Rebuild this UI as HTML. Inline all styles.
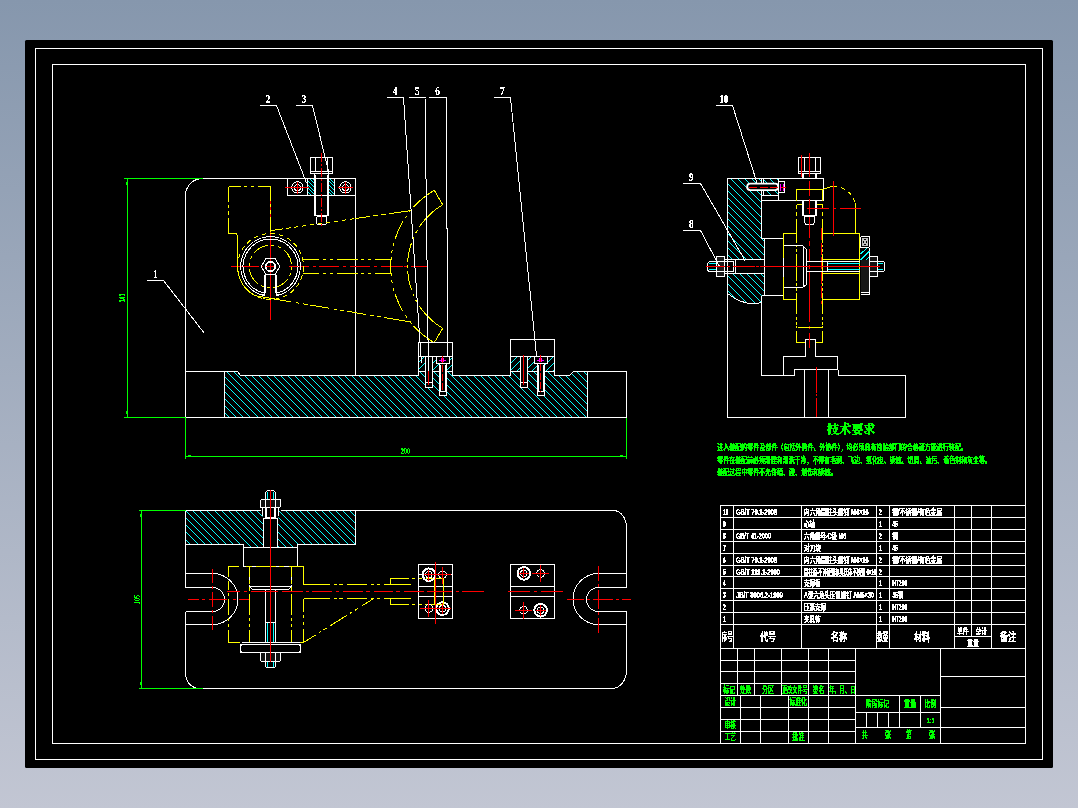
<!DOCTYPE html>
<html lang="zh"><head><meta charset="utf-8"><title>夹具装配图</title>
<style>
html,body{margin:0;padding:0;width:1078px;height:808px;overflow:hidden;background:#a9b2c4}
body{background:linear-gradient(to bottom,#8697ad 0%,#c2c6d3 100%)}
#sheet{position:absolute;left:25px;top:40px;width:1028px;height:728px;background:#000;border-radius:1.5px}
svg{position:absolute;left:0;top:0;display:block}
svg text{white-space:pre}
</style></head><body>
<div id="sheet"></div>
<svg width="1078" height="808" viewBox="0 0 1078 808" fill="none" stroke-width="1" shape-rendering="crispEdges">
<defs><filter id="th" x="-5%" y="-5%" width="110%" height="110%" color-interpolation-filters="sRGB"><feComponentTransfer><feFuncA type="discrete" tableValues="0 0 1 1 1"/></feComponentTransfer></filter></defs>
<rect x="35.5" y="48.5" width="1007" height="711" stroke="#fff" fill="none"/>
<rect x="52.5" y="64.5" width="973" height="679" stroke="#fff" fill="none"/>
<path d="M127.5 179L126.5 185M185.5 456.5L191 455.5M626.5 456.5L620 455.5M127.5 417L126.5 411" stroke="#0f0" fill="none"/>
<g filter="url(#th)"><text stroke="none" x="125.2" y="302.3" font-size="8.5" fill="#0f0" text-anchor="start" font-weight="bold" font-family='"Liberation Sans","Noto Sans CJK SC",sans-serif' textLength="8.6" lengthAdjust="spacingAndGlyphs" transform="rotate(-90 125.2 302.3)">141</text></g>
<g filter="url(#th)"><text stroke="none" x="400.8" y="454" font-size="8.5" fill="#0f0" text-anchor="start" font-weight="bold" font-family='"Liberation Sans","Noto Sans CJK SC",sans-serif' textLength="9.2" lengthAdjust="spacingAndGlyphs">200</text></g>
<clipPath id="hc1"><path d="M225 372H238L240.5 375.5H418.5V371.5H452.5V375.5H510.5V371.5H554.5V375.5H570L573.5 371.5H587V417.5H225Z"/></clipPath>
<path clip-path="url(#hc1)" d="M183.00 371L230.00 418M190.00 371L237.00 418M197.00 371L244.00 418M204.00 371L251.00 418M212.00 371L259.00 418M219.00 371L266.00 418M226.00 371L273.00 418M233.00 371L280.00 418M240.00 371L287.00 418M247.00 371L294.00 418M254.00 371L301.00 418M262.00 371L309.00 418M269.00 371L316.00 418M276.00 371L323.00 418M283.00 371L330.00 418M290.00 371L337.00 418M297.00 371L344.00 418M304.00 371L351.00 418M312.00 371L359.00 418M319.00 371L366.00 418M326.00 371L373.00 418M333.00 371L380.00 418M340.00 371L387.00 418M347.00 371L394.00 418M354.00 371L401.00 418M361.00 371L408.00 418M369.00 371L416.00 418M376.00 371L423.00 418M383.00 371L430.00 418M390.00 371L437.00 418M397.00 371L444.00 418M404.00 371L451.00 418M411.00 371L458.00 418M419.00 371L466.00 418M426.00 371L473.00 418M433.00 371L480.00 418M440.00 371L487.00 418M447.00 371L494.00 418M454.00 371L501.00 418M461.00 371L508.00 418M469.00 371L516.00 418M476.00 371L523.00 418M483.00 371L530.00 418M490.00 371L537.00 418M497.00 371L544.00 418M504.00 371L551.00 418M511.00 371L558.00 418M519.00 371L566.00 418M526.00 371L573.00 418M533.00 371L580.00 418M540.00 371L587.00 418M547.00 371L594.00 418M554.00 371L601.00 418M561.00 371L608.00 418M569.00 371L616.00 418M576.00 371L623.00 418M583.00 371L630.00 418" stroke="#0ff" fill="none"/>
<clipPath id="hc2"><path d="M418 357H452V371H418Z"/></clipPath>
<path clip-path="url(#hc2)" d="M425.00 356L409.00 372M432.00 356L416.00 372M440.00 356L424.00 372M447.00 356L431.00 372M454.00 356L438.00 372M461.00 356L445.00 372" stroke="#0ff" fill="none"/>
<clipPath id="hc3"><path d="M510 357H554V371H510Z"/></clipPath>
<path clip-path="url(#hc3)" d="M518.00 356L502.00 372M525.00 356L509.00 372M532.00 356L516.00 372M540.00 356L524.00 372M547.00 356L531.00 372M554.00 356L538.00 372M561.00 356L545.00 372M568.00 356L552.00 372" stroke="#0ff" fill="none"/>
<path d="M185.5 417.5V195.5A17 17 0 0 1 202.5 178.5H355.5V375" stroke="#fff" fill="none"/>
<line x1="185" y1="417.5" x2="627" y2="417.5" stroke="#fff" stroke-width="1"/>
<path d="M185.5 371.5H237.5L240.5 375.5H418.5M452.5 375.5H510.5M554.5 375.5H569.5L573.5 371.5H626.5V417.5" stroke="#fff" fill="none"/>
<line x1="224.5" y1="371" x2="224.5" y2="418" stroke="#fff" stroke-width="1"/>
<line x1="587.5" y1="371" x2="587.5" y2="418" stroke="#fff" stroke-width="1"/>
<rect x="287.5" y="178.5" width="68" height="17" stroke="#fff" fill="none"/>
<line x1="307.5" y1="178" x2="307.5" y2="196" stroke="#fff" stroke-width="1"/>
<line x1="334.5" y1="178" x2="334.5" y2="196" stroke="#fff" stroke-width="1"/>
<clipPath id="hc4"><path d="M308 179H314V195H308Z"/></clipPath>
<path clip-path="url(#hc4)" d="M294.00 178L312.00 196M298.00 178L316.00 196M301.00 178L319.00 196M305.00 178L323.00 196M309.00 178L327.00 196M312.00 178L330.00 196" stroke="#0ff" fill="none"/>
<clipPath id="hc5"><path d="M329 179H334V195H329Z"/></clipPath>
<path clip-path="url(#hc5)" d="M315.00 178L333.00 196M318.00 178L336.00 196M322.00 178L340.00 196M326.00 178L344.00 196M329.00 178L347.00 196M333.00 178L351.00 196" stroke="#0ff" fill="none"/>
<rect x="310.5" y="157.5" width="22" height="16" stroke="#fff" fill="none"/>
<line x1="315.5" y1="157" x2="315.5" y2="172" stroke="#fff" stroke-width="1"/>
<line x1="327.5" y1="157" x2="327.5" y2="172" stroke="#fff" stroke-width="1"/>
<line x1="310" y1="171.5" x2="333" y2="171.5" stroke="#fff" stroke-width="1"/>
<path d="M314.5 173.5V215.5H328.5V173.5M315.5 175V215M327.5 175V215" stroke="#fff" fill="none"/>
<path d="M316.5 216.5V223L317.5 224.5H325.5L326.5 223V216.5H316.5" stroke="#fff" fill="none"/>
<line x1="321.5" y1="153" x2="321.5" y2="228" stroke="#f00" stroke-width="1" stroke-dasharray="9 2 2 2"/>
<circle cx="297.5" cy="187.5" r="5.7" stroke="#fff" fill="none"/>
<circle cx="297.5" cy="187.5" r="3.0" stroke="#fff" fill="none"/>
<circle cx="345.5" cy="187.5" r="5.7" stroke="#fff" fill="none"/>
<circle cx="345.5" cy="187.5" r="3.0" stroke="#fff" fill="none"/>
<line x1="285" y1="187.5" x2="309" y2="187.5" stroke="#f00" stroke-width="1"/>
<line x1="297.5" y1="182" x2="297.5" y2="194" stroke="#f00" stroke-width="1"/>
<line x1="338" y1="187.5" x2="352.5" y2="187.5" stroke="#f00" stroke-width="1"/>
<line x1="345.5" y1="182" x2="345.5" y2="194" stroke="#f00" stroke-width="1"/>
<line x1="231" y1="266.5" x2="259.3" y2="266.5" stroke="#f00" stroke-width="1"/>
<line x1="261" y1="266.5" x2="263.4" y2="266.5" stroke="#f00" stroke-width="1"/>
<line x1="266" y1="266.5" x2="276" y2="266.5" stroke="#f00" stroke-width="1"/>
<line x1="289.3" y1="266.5" x2="308.6" y2="266.5" stroke="#f00" stroke-width="1"/>
<line x1="312.6" y1="266.5" x2="316" y2="266.5" stroke="#f00" stroke-width="1"/>
<line x1="318.9" y1="266.5" x2="339.3" y2="266.5" stroke="#f00" stroke-width="1"/>
<line x1="342.5" y1="266.5" x2="345.7" y2="266.5" stroke="#f00" stroke-width="1"/>
<line x1="350" y1="266.5" x2="370" y2="266.5" stroke="#f00" stroke-width="1"/>
<line x1="374" y1="266.5" x2="376.9" y2="266.5" stroke="#f00" stroke-width="1"/>
<line x1="380.7" y1="266.5" x2="402.9" y2="266.5" stroke="#f00" stroke-width="1"/>
<line x1="404" y1="266.5" x2="406.9" y2="266.5" stroke="#f00" stroke-width="1"/>
<line x1="411.4" y1="266.5" x2="427" y2="266.5" stroke="#f00" stroke-width="1"/>
<line x1="270.5" y1="200" x2="270.5" y2="320" stroke="#f00" stroke-width="1"/>
<path d="M228.50 186.50L241.10 186.50M244.10 186.50L247.10 186.50M250.70 186.50L254.30 186.50M257.90 186.50L270.50 186.50" stroke="#ff0" fill="none"/>
<path d="M228.50 186.50L228.50 201.60M228.50 204.60L228.50 207.60M228.50 211.20L228.50 214.80M228.50 218.40L228.50 233.50" stroke="#ff0" fill="none"/>
<path d="M270.50 186.50L270.50 200.60M270.50 203.60L270.50 206.60M270.50 210.20L270.50 213.80M270.50 217.40L270.50 231.50" stroke="#ff0" fill="none"/>
<path d="M228.5 233.5H236L237.5 235.5V268" stroke="#ff0" fill="none"/>
<path d="M237.50 266.50A33 33 0 0 0 264.77 299.00" stroke="#ff0" fill="none" stroke-dasharray="14 3 6 3 9 3 3 3"/>
<circle cx="270.5" cy="266.5" r="33" stroke="#ff0" fill="none" stroke-dasharray="5 3.6"/>
<circle cx="270.5" cy="266.5" r="21.2" stroke="#ff0" fill="none" stroke-dasharray="16.5 3.6 3 3.6 3 3.6" stroke-dashoffset="19.8"/>
<path d="M264.50 295.69A29.8 29.8 0 1 1 276.50 295.69" stroke="#fff" fill="none"/>
<path d="M264.50 293.23A27.4 27.4 0 1 1 276.50 293.23" stroke="#fff" fill="none"/>
<path d="M264.5 274.5V294.5M276.5 274.5V294.5M265.5 274.5V293M275.5 274.5V293M259 294.5H264M277 294.5H282" stroke="#fff" fill="none"/>
<path d="M279.70 266.50L275.10 274.47L265.90 274.47L261.30 266.50L265.90 258.53L275.10 258.53Z" stroke="#fff" fill="none"/>
<circle cx="270.5" cy="266.5" r="4.8" stroke="#fff" stroke-width="1.6" fill="none"/>
<path d="M302.50 259.50L319.30 259.50M322.90 259.50L326.10 259.50M329.70 259.50L332.90 259.50M336.50 259.50L357.50 259.50M361.10 259.50L364.30 259.50M367.90 259.50L371.10 259.50M374.70 259.50L391.50 259.50" stroke="#ff0" fill="none"/>
<path d="M302.50 273.50L319.30 273.50M322.90 273.50L326.10 273.50M329.70 273.50L332.90 273.50M336.50 273.50L357.50 273.50M361.10 273.50L364.30 273.50M367.90 273.50L371.10 273.50M374.70 273.50L391.50 273.50" stroke="#ff0" fill="none"/>
<line x1="270.5" y1="230.7" x2="410" y2="210.7" stroke="#ff0" stroke-width="1" stroke-dasharray="4.3 3.7"/>
<line x1="355" y1="218.6" x2="366" y2="217" stroke="#ff0" stroke-width="1"/>
<line x1="392" y1="213.3" x2="410" y2="210.7" stroke="#ff0" stroke-width="1"/>
<line x1="270.5" y1="230.7" x2="280" y2="229.3" stroke="#ff0" stroke-width="1"/>
<line x1="254.3" y1="295.60" x2="291.4" y2="301.86" stroke="#ff0"/>
<line x1="296.4" y1="302.70" x2="299.3" y2="303.19" stroke="#ff0"/>
<line x1="302.9" y1="303.80" x2="307.9" y2="304.64" stroke="#ff0"/>
<line x1="310" y1="305.00" x2="384" y2="317.48" stroke="#ff0" stroke-dasharray="19.6 4.3 3 3.6 4.3 2.7"/>
<line x1="384" y1="317.48" x2="411.4" y2="322.10" stroke="#ff0"/>
<path d="M413.77 326.13A88.6 88.6 0 0 1 413.77 206.87" stroke="#ff0" fill="none" stroke-dasharray="18.6 4 3 4.5 3 4.5" stroke-dashoffset="19.1"/>
<path d="M407.50 266.50A71.8 71.8 0 0 1 421.21 224.30" stroke="#ff0" fill="none" stroke-dasharray="1.5 3.5 19 4 3 4 3 4 19 4"/>
<path d="M407.50 266.50A71.8 71.8 0 0 0 421.21 308.70" stroke="#ff0" fill="none" stroke-dasharray="1.5 3.5 19 4 3 4 3 4 19 4"/>
<path d="M413.77 206.87A88.6 88.6 0 0 1 434.20 190.24" stroke="#ff0" fill="none"/>
<path d="M421.21 224.30A71.8 71.8 0 0 1 442.75 204.70" stroke="#ff0" fill="none"/>
<path d="M413.77 326.13A88.6 88.6 0 0 0 434.20 342.76" stroke="#ff0" fill="none"/>
<path d="M421.21 308.70A71.8 71.8 0 0 0 442.75 328.30" stroke="#ff0" fill="none"/>
<line x1="434.2" y1="190.24" x2="442.75" y2="204.7" stroke="#ff0" stroke-width="1"/>
<line x1="434.2" y1="342.76" x2="442.75" y2="328.3" stroke="#ff0" stroke-width="1"/>
<path d="M418.5 375.5V342.5H452.5V375.5M418.5 356.5H452.5" stroke="#fff" fill="none"/>
<path d="M510.5 375.5V339.5H554.5V375.5M510.5 356.5H554.5" stroke="#fff" fill="none"/>
<path d="M418.5 371.5H452.5M510.5 371.5H554.5" stroke="#fff" fill="none"/>
<rect x="425.5" y="356.5" width="7" height="31" stroke="#fff" fill="#000"/>
<line x1="425" y1="382.5" x2="433" y2="382.5" stroke="#fff" stroke-width="1"/>
<line x1="428.5" y1="371" x2="428.5" y2="385" stroke="#f00" stroke-width="1"/>
<rect x="439.5" y="363.5" width="7" height="31.5" stroke="#fff" fill="#000"/>
<rect x="436.5" y="356.5" width="13" height="7" stroke="#fff" fill="#000"/>
<line x1="439" y1="391.5" x2="447" y2="391.5" stroke="#fff" stroke-width="1"/>
<line x1="440.5" y1="365" x2="440.5" y2="392" stroke="#fff" stroke-width="1"/>
<line x1="445.5" y1="365" x2="445.5" y2="392" stroke="#fff" stroke-width="1"/>
<path d="M439 360.5H446M441 358.5H444M441 359.5H444M441 361.5H444" stroke="#f0f" fill="none"/>
<line x1="442.5" y1="356" x2="442.5" y2="392" stroke="#f00" stroke-width="1" stroke-dasharray="7 2"/>
<rect x="520.5" y="356.5" width="7" height="31" stroke="#fff" fill="#000"/>
<line x1="520" y1="382.5" x2="528" y2="382.5" stroke="#fff" stroke-width="1"/>
<line x1="523.5" y1="355" x2="523.5" y2="385" stroke="#f00" stroke-width="1"/>
<rect x="537.5" y="363.5" width="7" height="31.5" stroke="#fff" fill="#000"/>
<rect x="534.5" y="356.5" width="13" height="7" stroke="#fff" fill="#000"/>
<line x1="537" y1="391.5" x2="545" y2="391.5" stroke="#fff" stroke-width="1"/>
<line x1="538.5" y1="365" x2="538.5" y2="392" stroke="#fff" stroke-width="1"/>
<line x1="543.5" y1="365" x2="543.5" y2="392" stroke="#fff" stroke-width="1"/>
<path d="M537 360.5H544M539 358.5H542M539 359.5H542M539 361.5H542" stroke="#f0f" fill="none"/>
<line x1="540.5" y1="355" x2="540.5" y2="392" stroke="#f00" stroke-width="1" stroke-dasharray="7 2"/>
<line x1="147" y1="280.5" x2="164" y2="280.5" stroke="#fff" stroke-width="1"/>
<g filter="url(#th)"><text stroke="none" x="153.0" y="278.0" font-size="13.4" fill="#fff" text-anchor="start" font-weight="bold" font-family='"Liberation Serif","Noto Serif CJK SC",serif' textLength="4.6" lengthAdjust="spacingAndGlyphs">1</text></g>
<line x1="163.5" y1="280.5" x2="204.5" y2="333.5" stroke="#fff" stroke-width="1"/>
<line x1="260" y1="105.5" x2="277" y2="105.5" stroke="#fff" stroke-width="1"/>
<g filter="url(#th)"><text stroke="none" x="265.7" y="103.0" font-size="13.4" fill="#fff" text-anchor="start" font-weight="bold" font-family='"Liberation Serif","Noto Serif CJK SC",serif' textLength="4.6" lengthAdjust="spacingAndGlyphs">2</text></g>
<line x1="276.5" y1="105.5" x2="306.5" y2="183" stroke="#fff" stroke-width="1"/>
<line x1="296" y1="105.5" x2="313" y2="105.5" stroke="#fff" stroke-width="1"/>
<g filter="url(#th)"><text stroke="none" x="301.7" y="103.0" font-size="13.4" fill="#fff" text-anchor="start" font-weight="bold" font-family='"Liberation Serif","Noto Serif CJK SC",serif' textLength="4.6" lengthAdjust="spacingAndGlyphs">3</text></g>
<line x1="312.5" y1="105.5" x2="329" y2="173.5" stroke="#fff" stroke-width="1"/>
<line x1="387" y1="97.5" x2="404" y2="97.5" stroke="#fff" stroke-width="1"/>
<g filter="url(#th)"><text stroke="none" x="392.7" y="95.0" font-size="13.4" fill="#fff" text-anchor="start" font-weight="bold" font-family='"Liberation Serif","Noto Serif CJK SC",serif' textLength="4.6" lengthAdjust="spacingAndGlyphs">4</text></g>
<line x1="403.5" y1="97.5" x2="421.4" y2="363" stroke="#fff" stroke-width="1"/>
<line x1="409" y1="97.5" x2="426" y2="97.5" stroke="#fff" stroke-width="1"/>
<g filter="url(#th)"><text stroke="none" x="414.9" y="95.0" font-size="13.4" fill="#fff" text-anchor="start" font-weight="bold" font-family='"Liberation Serif","Noto Serif CJK SC",serif' textLength="4.6" lengthAdjust="spacingAndGlyphs">5</text></g>
<line x1="425.0" y1="97.5" x2="428.4" y2="371" stroke="#fff" stroke-width="1"/>
<line x1="429" y1="97.5" x2="447" y2="97.5" stroke="#fff" stroke-width="1"/>
<g filter="url(#th)"><text stroke="none" x="435.2" y="95.0" font-size="13.4" fill="#fff" text-anchor="start" font-weight="bold" font-family='"Liberation Serif","Noto Serif CJK SC",serif' textLength="4.6" lengthAdjust="spacingAndGlyphs">6</text></g>
<line x1="446.5" y1="97.5" x2="447.5" y2="357" stroke="#fff" stroke-width="1"/>
<line x1="494" y1="97.5" x2="511" y2="97.5" stroke="#fff" stroke-width="1"/>
<g filter="url(#th)"><text stroke="none" x="499.9" y="95.0" font-size="13.4" fill="#fff" text-anchor="start" font-weight="bold" font-family='"Liberation Serif","Noto Serif CJK SC",serif' textLength="4.6" lengthAdjust="spacingAndGlyphs">7</text></g>
<line x1="510.5" y1="97.5" x2="536.5" y2="356" stroke="#fff" stroke-width="1"/>
<line x1="124" y1="178.5" x2="203" y2="178.5" stroke="#0f0" stroke-width="1"/>
<line x1="127.5" y1="178" x2="127.5" y2="418" stroke="#0f0" stroke-width="1"/>
<line x1="124" y1="417.5" x2="186" y2="417.5" stroke="#0f0" stroke-width="1"/>
<line x1="185.5" y1="418" x2="185.5" y2="459" stroke="#0f0" stroke-width="1"/>
<line x1="626.5" y1="418" x2="626.5" y2="459" stroke="#0f0" stroke-width="1"/>
<line x1="185" y1="456.5" x2="627" y2="456.5" stroke="#0f0" stroke-width="1"/>
<clipPath id="hc6"><path d="M727.5 178.5H761.5V238.5H764.5V259.5H727.5Z M727.5 273.5H764.5V295.5H761.5V302.5Q745 307 727.5 293.5Z"/></clipPath>
<path clip-path="url(#hc6)" d="M600.00 177L729.00 306M607.00 177L736.00 306M614.00 177L743.00 306M621.00 177L750.00 306M629.00 177L758.00 306M636.00 177L765.00 306M643.00 177L772.00 306M650.00 177L779.00 306M657.00 177L786.00 306M664.00 177L793.00 306M671.00 177L800.00 306M679.00 177L808.00 306M686.00 177L815.00 306M693.00 177L822.00 306M700.00 177L829.00 306M707.00 177L836.00 306M714.00 177L843.00 306M721.00 177L850.00 306M729.00 177L858.00 306M736.00 177L865.00 306M743.00 177L872.00 306M750.00 177L879.00 306M757.00 177L886.00 306" stroke="#0ff" fill="none"/>
<clipPath id="hc7"><path d="M763.5 178.5H778.5V195.5H763.5Z"/></clipPath>
<path clip-path="url(#hc7)" d="M746.00 177L766.00 197M753.00 177L773.00 197M761.00 177L781.00 197M768.00 177L788.00 197M775.00 177L795.00 197" stroke="#0ff" fill="none"/>
<path d="M727.5 417.5V178.5H823.5V200.5H761.5V238.5H783.5" stroke="#fff" fill="none"/>
<path d="M727.5 417.5H905.5V375.5H838.5V369.5" stroke="#fff" fill="none"/>
<path d="M761.5 295.5V375.5H794.5V369.5H837.5V356.5H815.5V340.5Q815.5 339.5 814.5 339.5H806.5Q805.5 339.5 805.5 340.5V356.5H783.5V375.5" stroke="#fff" fill="none"/>
<path d="M761.5 295.5H783.5" stroke="#fff" fill="none"/>
<path d="M804.5 369.5V417.5M828.5 369.5V417.5" stroke="#fff" fill="none"/>
<path d="M764.5 238.5V295.5" stroke="#fff" fill="none"/>
<path d="M727.5 293.5Q745 307 761.5 302.5" stroke="#fff" fill="none"/>
<path d="M725 259.5H764.5M725 273.5H764.5" stroke="#fff" fill="none"/>
<path d="M735.5 259.5V273.5M733.5 261.5V271.5" stroke="#fff" fill="none"/>
<path d="M761.5 178.5V200.5M763.5 178.5V195.5M778.5 178.5V200.5M761.5 195.5H778.5" stroke="#fff" fill="none"/>
<rect x="747.2" y="183.6" width="31" height="6.5" rx="3" stroke="#fff" fill="#000" stroke-width="1.9" shape-rendering="auto"/>
<rect x="778.5" y="181.5" width="6" height="11" rx="1" stroke="#fff" fill="#000"/>
<path d="M780.5 184V191M783.5 184V191M780 187.5H785" stroke="#f0f" fill="none"/>
<line x1="749" y1="187.5" x2="786" y2="187.5" stroke="#f00" stroke-width="1" stroke-dasharray="8 2.5"/>
<rect x="798.5" y="157.5" width="22" height="16" stroke="#fff" fill="none"/>
<line x1="798" y1="171.5" x2="821" y2="171.5" stroke="#fff" stroke-width="1"/>
<line x1="804.5" y1="157" x2="804.5" y2="172" stroke="#fff" stroke-width="1"/>
<line x1="815.5" y1="157" x2="815.5" y2="172" stroke="#fff" stroke-width="1"/>
<path d="M802.5 173.5V178M803.5 173.5V178M815.5 173.5V178M816.5 173.5V178" stroke="#fff" fill="none"/>
<path d="M802.5 200.5V215.5H816.5V200.5M803.5 200.5V215M815.5 200.5V215" stroke="#fff" fill="none"/>
<path d="M804.5 216.5V222.5L806 224.5H813L814.5 222.5V216.5Z" stroke="#fff" fill="none"/>
<line x1="801.5" y1="154.5" x2="801.5" y2="177" stroke="#f00" stroke-width="1"/>
<line x1="809.5" y1="153" x2="809.5" y2="177" stroke="#f00" stroke-width="1"/>
<line x1="809.5" y1="181" x2="809.5" y2="196" stroke="#f00" stroke-width="1"/>
<line x1="809.5" y1="199" x2="809.5" y2="214" stroke="#f00" stroke-width="1"/>
<line x1="809.5" y1="217" x2="809.5" y2="238" stroke="#f00" stroke-width="1"/>
<line x1="809.5" y1="241" x2="809.5" y2="246" stroke="#f00" stroke-width="1"/>
<line x1="809.5" y1="249" x2="809.5" y2="262" stroke="#f00" stroke-width="1"/>
<line x1="809.5" y1="265" x2="809.5" y2="269" stroke="#f00" stroke-width="1"/>
<line x1="809.5" y1="272" x2="809.5" y2="322" stroke="#f00" stroke-width="1"/>
<line x1="809.5" y1="326" x2="809.5" y2="329" stroke="#f00" stroke-width="1"/>
<line x1="809.5" y1="333" x2="809.5" y2="348" stroke="#f00" stroke-width="1"/>
<line x1="816.5" y1="367" x2="816.5" y2="392.5" stroke="#f00" stroke-width="1"/>
<line x1="816.5" y1="394" x2="816.5" y2="396" stroke="#f00" stroke-width="1"/>
<line x1="816.5" y1="398" x2="816.5" y2="417" stroke="#f00" stroke-width="1"/>
<path d="M796.5 200.5V190.5Q796.5 189.5 797.5 189.5H821.5Q822.5 189.5 822.5 190.5V200.5" stroke="#ff0" fill="none"/>
<path d="M796.5 204.5H802M817 204.5H822.5" stroke="#ff0" fill="none"/>
<line x1="796.5" y1="204.5" x2="796.5" y2="209" stroke="#ff0" stroke-width="1"/>
<line x1="796.5" y1="211.8" x2="796.5" y2="215.5" stroke="#ff0" stroke-width="1"/>
<line x1="796.5" y1="219" x2="796.5" y2="242.8" stroke="#ff0" stroke-width="1"/>
<line x1="796.5" y1="244.6" x2="796.5" y2="246.5" stroke="#ff0" stroke-width="1"/>
<line x1="796.5" y1="249" x2="796.5" y2="252" stroke="#ff0" stroke-width="1"/>
<line x1="796.5" y1="254" x2="796.5" y2="280.6" stroke="#ff0" stroke-width="1"/>
<line x1="796.5" y1="283" x2="796.5" y2="286" stroke="#ff0" stroke-width="1"/>
<line x1="796.5" y1="288" x2="796.5" y2="290.5" stroke="#ff0" stroke-width="1"/>
<line x1="796.5" y1="293" x2="796.5" y2="314" stroke="#ff0" stroke-width="1"/>
<line x1="796.5" y1="317" x2="796.5" y2="319.5" stroke="#ff0" stroke-width="1"/>
<line x1="796.5" y1="322" x2="796.5" y2="324.5" stroke="#ff0" stroke-width="1"/>
<line x1="796.5" y1="326" x2="796.5" y2="328" stroke="#ff0" stroke-width="1"/>
<line x1="822.5" y1="204.5" x2="822.5" y2="209" stroke="#ff0" stroke-width="1"/>
<line x1="822.5" y1="211.8" x2="822.5" y2="215.5" stroke="#ff0" stroke-width="1"/>
<line x1="822.5" y1="219" x2="822.5" y2="242.8" stroke="#ff0" stroke-width="1"/>
<line x1="822.5" y1="244.6" x2="822.5" y2="246.5" stroke="#ff0" stroke-width="1"/>
<line x1="822.5" y1="249" x2="822.5" y2="252" stroke="#ff0" stroke-width="1"/>
<line x1="822.5" y1="254" x2="822.5" y2="280.6" stroke="#ff0" stroke-width="1"/>
<line x1="822.5" y1="283" x2="822.5" y2="286" stroke="#ff0" stroke-width="1"/>
<line x1="822.5" y1="288" x2="822.5" y2="290.5" stroke="#ff0" stroke-width="1"/>
<line x1="822.5" y1="293" x2="822.5" y2="314" stroke="#ff0" stroke-width="1"/>
<line x1="822.5" y1="317" x2="822.5" y2="319.5" stroke="#ff0" stroke-width="1"/>
<line x1="822.5" y1="322" x2="822.5" y2="324.5" stroke="#ff0" stroke-width="1"/>
<line x1="822.5" y1="326" x2="822.5" y2="328" stroke="#ff0" stroke-width="1"/>
<path d="M797.5 327.5H821.5M796.5 331V342.5H805M816 342.5H822.5V331" stroke="#ff0" fill="none"/>
<path d="M823 189.5Q828 186.8 833.5 186.5" stroke="#ff0" fill="none"/>
<path d="M833.5 186.5A22 22 0 0 1 855.5 205" stroke="#ff0" fill="none" stroke-dasharray="4 4"/>
<path d="M855.5 203V233.5" stroke="#ff0" fill="none"/>
<path d="M796.5 233.5H783.5V299.5H796.5M822.5 233.5H859.5V299.5H822.5" stroke="#ff0" fill="none"/>
<path d="M822.5 259.5H859.5M822.5 273.5H859.5" stroke="#ff0" fill="none"/>
<line x1="807" y1="208.5" x2="828.5" y2="208.5" stroke="#f00" stroke-width="1"/>
<line x1="832.5" y1="208.5" x2="836" y2="208.5" stroke="#f00" stroke-width="1"/>
<line x1="839.5" y1="208.5" x2="861" y2="208.5" stroke="#f00" stroke-width="1"/>
<line x1="833.5" y1="181" x2="833.5" y2="236" stroke="#f00" stroke-width="1"/>
<line x1="821.5" y1="228" x2="821.5" y2="304" stroke="#f00" stroke-width="1" stroke-dasharray="12 2.5"/>
<path d="M783.5 245.5H802.5L806.5 249.5V284.5L802.5 287.5H783.5M803.5 247V286" stroke="#fff" fill="none"/>
<line x1="783.5" y1="258" x2="783.5" y2="277" stroke="#fff" stroke-width="1"/>
<path d="M806.5 261.5H827.5V271.5H806.5" stroke="#fff" fill="none"/>
<path d="M827.5 261.5H860M827.5 271.5H860" stroke="#fff" fill="none"/>
<path d="M828 263.5H860M828 269.5H860" stroke="#0ff" fill="none"/>
<rect x="707.5" y="261.5" width="10" height="10" rx="3" stroke="#fff" fill="#000"/>
<path d="M709 263.5H716M709 269.5H716" stroke="#0ff" fill="none"/>
<rect x="716.5" y="256.5" width="8" height="20" stroke="#fff" fill="#1c1c1c"/>
<rect x="724.5" y="261.5" width="9" height="10" stroke="#fff" fill="none"/>
<line x1="716" y1="261.5" x2="725" y2="261.5" stroke="#fff" stroke-width="1"/>
<line x1="716" y1="271.5" x2="725" y2="271.5" stroke="#fff" stroke-width="1"/>
<rect x="860.5" y="236.5" width="9" height="11" rx="1.5" stroke="#fff" fill="#000"/>
<path d="M862.5 238.5H867.5V245.5H862.5ZM863 239L867 245M867 239L863 245" stroke="#fff" fill="none" stroke-opacity="0.75"/>
<rect x="860.5" y="260" width="9" height="32" fill="#161616" stroke="none"/>
<path d="M869.5 247.5V294.5H860.5M860.5 292.5H869.5" stroke="#fff" fill="none"/>
<path d="M860.5 254L867.5 247.5M860.5 260L869.5 251M866 260L869.5 256.5" stroke="#0ff" fill="none"/>
<rect x="877.5" y="261.5" width="7" height="10" rx="2" stroke="#fff" fill="#000"/>
<path d="M878 263.5H883M878 269.5H883" stroke="#0ff" fill="none"/>
<rect x="869.5" y="256.5" width="8" height="20" stroke="#fff" fill="#121212"/>
<line x1="870" y1="261.5" x2="878" y2="261.5" stroke="#fff" stroke-width="1"/>
<line x1="870" y1="271.5" x2="878" y2="271.5" stroke="#fff" stroke-width="1"/>
<line x1="706" y1="266.5" x2="724.5" y2="266.5" stroke="#f00" stroke-width="1"/>
<line x1="726.5" y1="266.5" x2="729.5" y2="266.5" stroke="#f00" stroke-width="1"/>
<line x1="733" y1="266.5" x2="755" y2="266.5" stroke="#f00" stroke-width="1"/>
<line x1="756" y1="266.5" x2="758.5" y2="266.5" stroke="#f00" stroke-width="1"/>
<line x1="759.5" y1="266.5" x2="880" y2="266.5" stroke="#f00" stroke-width="1"/>
<line x1="716" y1="105.5" x2="733" y2="105.5" stroke="#fff" stroke-width="1"/>
<g filter="url(#th)"><text stroke="none" x="719.4" y="103.0" font-size="13.4" fill="#fff" text-anchor="start" font-weight="bold" font-family='"Liberation Serif","Noto Serif CJK SC",serif' textLength="8.8" lengthAdjust="spacingAndGlyphs">10</text></g>
<line x1="732.5" y1="105.5" x2="757" y2="183" stroke="#fff" stroke-width="1"/>
<line x1="683" y1="183.5" x2="701" y2="183.5" stroke="#fff" stroke-width="1"/>
<g filter="url(#th)"><text stroke="none" x="689.0999999999999" y="181.0" font-size="13.4" fill="#fff" text-anchor="start" font-weight="bold" font-family='"Liberation Serif","Noto Serif CJK SC",serif' textLength="4.4" lengthAdjust="spacingAndGlyphs">9</text></g>
<line x1="700.5" y1="183.5" x2="745" y2="260.5" stroke="#fff" stroke-width="1"/>
<line x1="683" y1="230.5" x2="701" y2="230.5" stroke="#fff" stroke-width="1"/>
<g filter="url(#th)"><text stroke="none" x="689.0999999999999" y="228.0" font-size="13.4" fill="#fff" text-anchor="start" font-weight="bold" font-family='"Liberation Serif","Noto Serif CJK SC",serif' textLength="4.4" lengthAdjust="spacingAndGlyphs">8</text></g>
<line x1="700.5" y1="230.5" x2="719.5" y2="266.5" stroke="#fff" stroke-width="1"/>
<g filter="url(#th)"><text stroke="none" x="140.1" y="604.2" font-size="8.5" fill="#0f0" text-anchor="start" font-weight="normal" font-family='"Liberation Sans","Noto Sans CJK SC",sans-serif' textLength="9.4" lengthAdjust="spacingAndGlyphs" transform="rotate(-90 140.1 604.2)">105</text></g>
<clipPath id="hc8"><path d="M185.5 510.5H262.5V518.5H278.5V510.5H355.5V544.5H297.5V547.5H278V518.5H263V547.5H243.5V544.5H185.5Z"/></clipPath>
<path clip-path="url(#hc8)" d="M148.00 509L188.00 549M155.00 509L195.00 549M163.00 509L203.00 549M170.00 509L210.00 549M177.00 509L217.00 549M184.00 509L224.00 549M191.00 509L231.00 549M198.00 509L238.00 549M205.00 509L245.00 549M213.00 509L253.00 549M220.00 509L260.00 549M227.00 509L267.00 549M234.00 509L274.00 549M241.00 509L281.00 549M248.00 509L288.00 549M255.00 509L295.00 549M263.00 509L303.00 549M270.00 509L310.00 549M277.00 509L317.00 549M284.00 509L324.00 549M291.00 509L331.00 549M298.00 509L338.00 549M305.00 509L345.00 549M313.00 509L353.00 549M320.00 509L360.00 549M327.00 509L367.00 549M334.00 509L374.00 549M341.00 509L381.00 549M348.00 509L388.00 549" stroke="#0ff" fill="none"/>
<path d="M185.5 587.5V510.5H260.5M280.5 510.5H613.5A13 17 0 0 1 626.5 527.5V587.5M626.5 611.5V670.5A14.5 18 0 0 1 612 688.5H199.5A14 15 0 0 1 185.5 673.5V611.5" stroke="#fff" fill="none"/>
<path d="M185.5 544.5H243.5V566.5M297.5 566.5V544.5H355.5V510.5M243.5 547.5H263.5M277.5 547.5H297.5" stroke="#fff" fill="none"/>
<path d="M185.5 573.5H212.5A25.5 25.5 0 0 1 212.5 624.5H185.5M185.5 587.5H212.5A12 12 0 0 1 212.5 611.5H185.5" stroke="#fff" fill="none"/>
<path d="M626.5 573.5H598.5A25.5 25.5 0 0 0 598.5 624.5H626.5M626.5 587.5H598.5A12 12 0 0 0 598.5 611.5H626.5" stroke="#fff" fill="none"/>
<rect x="265.5" y="490.5" width="10" height="12" rx="3" stroke="#fff" fill="#000"/>
<path d="M267.5 492V499M273.5 492V499" stroke="#0ff" fill="none"/>
<rect x="260.5" y="499.5" width="20" height="8" rx="1.5" stroke="#fff" fill="#111"/>
<path d="M262.5 507.5V510.5M278.5 507.5V510.5M265.5 499.5V507.5M275.5 499.5V507.5" stroke="#fff" fill="none"/>
<path d="M262.5 510.5V516M278.5 510.5V516M265.5 507.5V517.5H275.5V507.5M266.5 508V517M274.5 508V517" stroke="#fff" fill="none"/>
<rect x="263.5" y="518.5" width="14" height="29" stroke="#fff" fill="#000"/>
<line x1="243" y1="566.5" x2="298" y2="566.5" stroke="#fff" stroke-width="1"/>
<line x1="228.2" y1="566.5" x2="238.6" y2="566.5" stroke="#ff0" stroke-width="1"/>
<line x1="246.4" y1="566.5" x2="252.3" y2="566.5" stroke="#ff0" stroke-width="1"/>
<line x1="255.9" y1="566.5" x2="269.5" y2="566.5" stroke="#ff0" stroke-width="1"/>
<line x1="270.5" y1="566.5" x2="275.5" y2="566.5" stroke="#ff0" stroke-width="1"/>
<line x1="279" y1="566.5" x2="283.6" y2="566.5" stroke="#ff0" stroke-width="1"/>
<line x1="288.6" y1="566.5" x2="304" y2="566.5" stroke="#ff0" stroke-width="1"/>
<line x1="228.5" y1="566" x2="228.5" y2="577.3" stroke="#ff0" stroke-width="1"/>
<line x1="228.5" y1="581" x2="228.5" y2="590" stroke="#ff0" stroke-width="1"/>
<line x1="228.5" y1="592.9" x2="228.5" y2="595.7" stroke="#ff0" stroke-width="1"/>
<line x1="228.5" y1="598.6" x2="228.5" y2="615" stroke="#ff0" stroke-width="1"/>
<line x1="228.5" y1="617.9" x2="228.5" y2="620.7" stroke="#ff0" stroke-width="1"/>
<line x1="228.5" y1="623.6" x2="228.5" y2="627.1" stroke="#ff0" stroke-width="1"/>
<line x1="228.5" y1="630" x2="228.5" y2="643" stroke="#ff0" stroke-width="1"/>
<path d="M228.5 642.5H239.5M299.5 642.5H303.5" stroke="#ff0" fill="none"/>
<line x1="249.5" y1="566" x2="249.5" y2="577" stroke="#ff0" stroke-width="1"/>
<line x1="249.5" y1="580" x2="249.5" y2="584" stroke="#ff0" stroke-width="1"/>
<line x1="249.5" y1="587" x2="249.5" y2="591" stroke="#ff0" stroke-width="1"/>
<line x1="249.5" y1="594" x2="249.5" y2="614.5" stroke="#ff0" stroke-width="1"/>
<line x1="249.5" y1="617.7" x2="249.5" y2="621" stroke="#ff0" stroke-width="1"/>
<line x1="249.5" y1="623.8" x2="249.5" y2="627.1" stroke="#ff0" stroke-width="1"/>
<line x1="249.5" y1="630" x2="249.5" y2="643" stroke="#ff0" stroke-width="1"/>
<line x1="291.5" y1="566" x2="291.5" y2="577" stroke="#ff0" stroke-width="1"/>
<line x1="291.5" y1="580" x2="291.5" y2="584" stroke="#ff0" stroke-width="1"/>
<line x1="291.5" y1="587" x2="291.5" y2="591" stroke="#ff0" stroke-width="1"/>
<line x1="291.5" y1="594" x2="291.5" y2="614.5" stroke="#ff0" stroke-width="1"/>
<line x1="291.5" y1="617.7" x2="291.5" y2="621" stroke="#ff0" stroke-width="1"/>
<line x1="291.5" y1="623.8" x2="291.5" y2="627.1" stroke="#ff0" stroke-width="1"/>
<line x1="291.5" y1="630" x2="291.5" y2="643" stroke="#ff0" stroke-width="1"/>
<line x1="303.5" y1="566" x2="303.5" y2="585" stroke="#ff0" stroke-width="1"/>
<line x1="303.5" y1="598.6" x2="303.5" y2="611.8" stroke="#ff0" stroke-width="1"/>
<line x1="303.5" y1="615" x2="303.5" y2="617.7" stroke="#ff0" stroke-width="1"/>
<line x1="303.5" y1="621.8" x2="303.5" y2="625" stroke="#ff0" stroke-width="1"/>
<line x1="303.5" y1="628.6" x2="303.5" y2="643" stroke="#ff0" stroke-width="1"/>
<path d="M303.50 584.50L330.15 584.50M333.75 584.50L336.55 584.50M339.45 584.50L343.05 584.50M347.25 584.50L367.25 584.50M370.85 584.50L373.65 584.50M376.55 584.50L380.15 584.50M384.35 584.50L411.00 584.50" stroke="#ff0" fill="none"/>
<path d="M303.50 598.50L330.15 598.50M333.75 598.50L336.55 598.50M339.45 598.50L343.05 598.50M347.25 598.50L367.25 598.50M370.85 598.50L373.65 598.50M376.55 598.50L380.15 598.50M384.35 598.50L411.00 598.50" stroke="#ff0" fill="none"/>
<path d="M303.50 642.50L315.58 634.93M318.63 633.02L321.01 631.54M323.46 630.00L326.52 628.09M330.07 625.86L347.03 615.24M350.08 613.33L352.45 611.85M354.91 610.31L357.96 608.40M361.52 606.17L373.60 598.60" stroke="#ff0" fill="none"/>
<path d="M390.5 584.5V578.5H409M390.5 598.5V604.5H409" stroke="#ff0" fill="none"/>
<path d="M411.8 578.5H415M419 578.5H422M426.4 578.5H443.5M411.8 604.5H415M418.5 604.5H422M425 604.5H443.5" stroke="#ff0" fill="none"/>
<path d="M249.5 584.5V586.5H291.5V584.5M249.5 586.5L252.5 589.5H288.5L291.5 586.5" stroke="#fff" fill="none"/>
<path d="M265.5 590V642M275.5 590V642M265.5 622.5H275.5" stroke="#fff" fill="none"/>
<path d="M267.5 623V642M273.5 623V642" stroke="#0ff" fill="none"/>
<line x1="249.5" y1="577" x2="249.5" y2="580" stroke="#fff" stroke-width="1"/>
<line x1="291.5" y1="577" x2="291.5" y2="580" stroke="#fff" stroke-width="1"/>
<line x1="242" y1="642.5" x2="300" y2="642.5" stroke="#fff" stroke-width="1"/>
<rect x="240.5" y="644.5" width="60" height="8" rx="2" stroke="#fff" fill="#000" stroke-width="1.5"/>
<rect x="265.5" y="656.5" width="10" height="11" rx="2" stroke="#fff" fill="#000"/>
<path d="M267.5 661V667M273.5 661V667" stroke="#0ff" fill="none"/>
<rect x="260.5" y="652.5" width="20" height="9" rx="2" stroke="#fff" fill="#111"/>
<path d="M265.5 653V661M275.5 653V661" stroke="#fff" fill="none"/>
<rect x="418.5" y="564.5" width="34" height="54" stroke="#fff" fill="none"/>
<line x1="418" y1="586.5" x2="453" y2="586.5" stroke="#fff" stroke-width="1"/>
<line x1="418" y1="596.5" x2="453" y2="596.5" stroke="#fff" stroke-width="1"/>
<rect x="510.5" y="564.5" width="44" height="54" stroke="#fff" fill="none"/>
<line x1="510" y1="586.5" x2="555" y2="586.5" stroke="#fff" stroke-width="1"/>
<line x1="510" y1="596.5" x2="555" y2="596.5" stroke="#fff" stroke-width="1"/>
<path d="M418.5 574.5H423M447 574.5H452.5" stroke="#fff" fill="none"/>
<circle cx="428.9" cy="574.7" r="6.3" stroke="#fff" stroke-width="2" fill="none"/>
<circle cx="428.9" cy="574.7" r="3.2" stroke="#fff" fill="none"/>
<circle cx="442.5" cy="574.7" r="3.8" stroke="#fff" fill="none"/>
<circle cx="428.9" cy="608.5" r="3.8" stroke="#fff" fill="none"/>
<circle cx="442.5" cy="608.6" r="6.3" stroke="#fff" stroke-width="2" fill="none"/>
<circle cx="442.5" cy="608.6" r="3.2" stroke="#fff" fill="none"/>
<circle cx="523.8" cy="573.4" r="6.3" stroke="#fff" stroke-width="2" fill="none"/>
<circle cx="523.8" cy="573.4" r="3.2" stroke="#fff" fill="none"/>
<circle cx="540.6" cy="573.4" r="3.8" stroke="#fff" fill="none"/>
<circle cx="523.6" cy="610.3" r="3.8" stroke="#fff" fill="none"/>
<circle cx="540.6" cy="610.3" r="6.3" stroke="#fff" stroke-width="2" fill="none"/>
<circle cx="540.6" cy="610.3" r="3.2" stroke="#fff" fill="none"/>
<path d="M434.5 578.5V604.5M435.5 578.5V604.5M443.5 578.5V604.5M434.5 578.5H443.5M434.5 604.5H443.5" stroke="#ff0" fill="none"/>
<line x1="270.5" y1="489.5" x2="270.5" y2="662" stroke="#f00" stroke-width="1"/>
<line x1="227.1" y1="591.5" x2="240" y2="591.5" stroke="#f00" stroke-width="1"/>
<line x1="243.5" y1="591.5" x2="246.5" y2="591.5" stroke="#f00" stroke-width="1"/>
<line x1="250.7" y1="591.5" x2="277.9" y2="591.5" stroke="#f00" stroke-width="1"/>
<line x1="282.1" y1="591.5" x2="303" y2="591.5" stroke="#f00" stroke-width="1"/>
<line x1="306" y1="591.5" x2="309" y2="591.5" stroke="#f00" stroke-width="1"/>
<line x1="312.1" y1="591.5" x2="332.1" y2="591.5" stroke="#f00" stroke-width="1"/>
<line x1="335.7" y1="591.5" x2="339.3" y2="591.5" stroke="#f00" stroke-width="1"/>
<line x1="342.9" y1="591.5" x2="362.9" y2="591.5" stroke="#f00" stroke-width="1"/>
<line x1="366.4" y1="591.5" x2="370" y2="591.5" stroke="#f00" stroke-width="1"/>
<line x1="373.6" y1="591.5" x2="392.9" y2="591.5" stroke="#f00" stroke-width="1"/>
<line x1="396.4" y1="591.5" x2="400.3" y2="591.5" stroke="#f00" stroke-width="1"/>
<line x1="404.1" y1="591.5" x2="424.1" y2="591.5" stroke="#f00" stroke-width="1"/>
<line x1="427.3" y1="591.5" x2="451.8" y2="591.5" stroke="#f00" stroke-width="1"/>
<line x1="455.9" y1="591.5" x2="459.1" y2="591.5" stroke="#f00" stroke-width="1"/>
<line x1="462.3" y1="591.5" x2="484.1" y2="591.5" stroke="#f00" stroke-width="1"/>
<line x1="507.9" y1="591.5" x2="530" y2="591.5" stroke="#f00" stroke-width="1"/>
<line x1="534.1" y1="591.5" x2="536.8" y2="591.5" stroke="#f00" stroke-width="1"/>
<line x1="541.1" y1="591.5" x2="563.2" y2="591.5" stroke="#f00" stroke-width="1"/>
<line x1="423.8" y1="574.5" x2="451" y2="574.5" stroke="#f00" stroke-width="1"/>
<line x1="428.5" y1="570" x2="428.5" y2="580.5" stroke="#f00" stroke-width="1"/>
<line x1="442.5" y1="566.8" x2="442.5" y2="583.6" stroke="#f00" stroke-width="1"/>
<line x1="420" y1="608.5" x2="450.5" y2="608.5" stroke="#f00" stroke-width="1"/>
<line x1="428.5" y1="600" x2="428.5" y2="617" stroke="#f00" stroke-width="1"/>
<line x1="442.5" y1="603" x2="442.5" y2="614" stroke="#f00" stroke-width="1"/>
<line x1="435.5" y1="562" x2="435.5" y2="624" stroke="#f00" stroke-width="1"/>
<line x1="519" y1="573.5" x2="529.2" y2="573.5" stroke="#f00" stroke-width="1"/>
<line x1="523.5" y1="568.2" x2="523.5" y2="577.8" stroke="#f00" stroke-width="1"/>
<line x1="532" y1="573.5" x2="549.2" y2="573.5" stroke="#f00" stroke-width="1"/>
<line x1="540.5" y1="565" x2="540.5" y2="582" stroke="#f00" stroke-width="1"/>
<line x1="515" y1="610.5" x2="532" y2="610.5" stroke="#f00" stroke-width="1"/>
<line x1="523.5" y1="602" x2="523.5" y2="618.6" stroke="#f00" stroke-width="1"/>
<line x1="536" y1="610.5" x2="546" y2="610.5" stroke="#f00" stroke-width="1"/>
<line x1="540.5" y1="605" x2="540.5" y2="615.5" stroke="#f00" stroke-width="1"/>
<line x1="212.5" y1="568.8" x2="212.5" y2="583" stroke="#f00" stroke-width="1"/>
<line x1="212.5" y1="586" x2="212.5" y2="589" stroke="#f00" stroke-width="1"/>
<line x1="212.5" y1="592" x2="212.5" y2="607" stroke="#f00" stroke-width="1"/>
<line x1="212.5" y1="610" x2="212.5" y2="613" stroke="#f00" stroke-width="1"/>
<line x1="212.5" y1="616" x2="212.5" y2="630" stroke="#f00" stroke-width="1"/>
<line x1="188" y1="599.5" x2="199.4" y2="599.5" stroke="#f00" stroke-width="1"/>
<line x1="202.2" y1="599.5" x2="205" y2="599.5" stroke="#f00" stroke-width="1"/>
<line x1="208.6" y1="599.5" x2="227.2" y2="599.5" stroke="#f00" stroke-width="1"/>
<line x1="232.8" y1="599.5" x2="235.7" y2="599.5" stroke="#f00" stroke-width="1"/>
<line x1="239.3" y1="599.5" x2="248.6" y2="599.5" stroke="#f00" stroke-width="1"/>
<line x1="598.5" y1="566.3" x2="598.5" y2="581" stroke="#f00" stroke-width="1"/>
<line x1="598.5" y1="584" x2="598.5" y2="587" stroke="#f00" stroke-width="1"/>
<line x1="598.5" y1="590" x2="598.5" y2="609" stroke="#f00" stroke-width="1"/>
<line x1="598.5" y1="612" x2="598.5" y2="615" stroke="#f00" stroke-width="1"/>
<line x1="598.5" y1="618" x2="598.5" y2="632.5" stroke="#f00" stroke-width="1"/>
<line x1="566.8" y1="599.5" x2="584" y2="599.5" stroke="#f00" stroke-width="1"/>
<line x1="587" y1="599.5" x2="590" y2="599.5" stroke="#f00" stroke-width="1"/>
<line x1="593" y1="599.5" x2="613" y2="599.5" stroke="#f00" stroke-width="1"/>
<line x1="616" y1="599.5" x2="619" y2="599.5" stroke="#f00" stroke-width="1"/>
<line x1="622" y1="599.5" x2="630.5" y2="599.5" stroke="#f00" stroke-width="1"/>
<line x1="139" y1="510.5" x2="186" y2="510.5" stroke="#0f0" stroke-width="1"/>
<line x1="141.5" y1="510" x2="141.5" y2="689" stroke="#0f0" stroke-width="1"/>
<line x1="139" y1="688.5" x2="203" y2="688.5" stroke="#0f0" stroke-width="1"/>
<path d="M141.5 511L140.5 517M141.5 688L140.5 682" stroke="#0f0" fill="none"/>
<line x1="720" y1="505.5" x2="1026" y2="505.5" stroke="#fff" stroke-width="1"/>
<line x1="720" y1="517.5" x2="1026" y2="517.5" stroke="#fff" stroke-width="1"/>
<line x1="720" y1="529.5" x2="1026" y2="529.5" stroke="#fff" stroke-width="1"/>
<line x1="720" y1="541.5" x2="1026" y2="541.5" stroke="#fff" stroke-width="1"/>
<line x1="720" y1="553.5" x2="1026" y2="553.5" stroke="#fff" stroke-width="1"/>
<line x1="720" y1="565.5" x2="1026" y2="565.5" stroke="#fff" stroke-width="1"/>
<line x1="720" y1="576.5" x2="1026" y2="576.5" stroke="#fff" stroke-width="1"/>
<line x1="720" y1="588.5" x2="1026" y2="588.5" stroke="#fff" stroke-width="1"/>
<line x1="720" y1="600.5" x2="1026" y2="600.5" stroke="#fff" stroke-width="1"/>
<line x1="720" y1="612.5" x2="1026" y2="612.5" stroke="#fff" stroke-width="1"/>
<line x1="720" y1="624.5" x2="1026" y2="624.5" stroke="#fff" stroke-width="1"/>
<line x1="733.5" y1="505" x2="733.5" y2="649" stroke="#fff" stroke-width="1"/>
<line x1="801.5" y1="505" x2="801.5" y2="649" stroke="#fff" stroke-width="1"/>
<line x1="876.5" y1="505" x2="876.5" y2="649" stroke="#fff" stroke-width="1"/>
<line x1="889.5" y1="505" x2="889.5" y2="649" stroke="#fff" stroke-width="1"/>
<line x1="954.5" y1="505" x2="954.5" y2="649" stroke="#fff" stroke-width="1"/>
<line x1="971.5" y1="505" x2="971.5" y2="637" stroke="#fff" stroke-width="1"/>
<line x1="991.5" y1="505" x2="991.5" y2="649" stroke="#fff" stroke-width="1"/>
<line x1="720.5" y1="505" x2="720.5" y2="744" stroke="#fff" stroke-width="1"/>
<line x1="720" y1="648.5" x2="1026" y2="648.5" stroke="#fff" stroke-width="1"/>
<line x1="954" y1="636.5" x2="992" y2="636.5" stroke="#fff" stroke-width="1"/>
<line x1="720" y1="660.5" x2="856" y2="660.5" stroke="#fff" stroke-width="1"/>
<line x1="720" y1="671.5" x2="856" y2="671.5" stroke="#fff" stroke-width="1"/>
<line x1="720" y1="683.5" x2="856" y2="683.5" stroke="#fff" stroke-width="1"/>
<line x1="720" y1="695.5" x2="856" y2="695.5" stroke="#fff" stroke-width="1"/>
<line x1="720" y1="707.5" x2="856" y2="707.5" stroke="#fff" stroke-width="1"/>
<line x1="720" y1="719.5" x2="856" y2="719.5" stroke="#fff" stroke-width="1"/>
<line x1="720" y1="731.5" x2="856" y2="731.5" stroke="#fff" stroke-width="1"/>
<line x1="737.5" y1="648" x2="737.5" y2="696" stroke="#fff" stroke-width="1"/>
<line x1="754.5" y1="648" x2="754.5" y2="696" stroke="#fff" stroke-width="1"/>
<line x1="781.5" y1="648" x2="781.5" y2="696" stroke="#fff" stroke-width="1"/>
<line x1="740.5" y1="695" x2="740.5" y2="744" stroke="#fff" stroke-width="1"/>
<line x1="760.5" y1="695" x2="760.5" y2="744" stroke="#fff" stroke-width="1"/>
<line x1="788.5" y1="695" x2="788.5" y2="744" stroke="#fff" stroke-width="1"/>
<line x1="808.5" y1="648" x2="808.5" y2="744" stroke="#fff" stroke-width="1"/>
<line x1="828.5" y1="648" x2="828.5" y2="744" stroke="#fff" stroke-width="1"/>
<line x1="855.5" y1="648" x2="855.5" y2="744" stroke="#fff" stroke-width="1"/>
<line x1="940.5" y1="648" x2="940.5" y2="744" stroke="#fff" stroke-width="1"/>
<line x1="855" y1="695.5" x2="941" y2="695.5" stroke="#fff" stroke-width="1"/>
<line x1="855" y1="712.5" x2="941" y2="712.5" stroke="#fff" stroke-width="1"/>
<line x1="855" y1="727.5" x2="1026" y2="727.5" stroke="#fff" stroke-width="1"/>
<line x1="899.5" y1="695" x2="899.5" y2="728" stroke="#fff" stroke-width="1"/>
<line x1="920.5" y1="695" x2="920.5" y2="728" stroke="#fff" stroke-width="1"/>
<line x1="866.5" y1="712" x2="866.5" y2="728" stroke="#fff" stroke-width="1"/>
<line x1="877.5" y1="712" x2="877.5" y2="728" stroke="#fff" stroke-width="1"/>
<line x1="888.5" y1="712" x2="888.5" y2="728" stroke="#fff" stroke-width="1"/>
<line x1="940" y1="676.5" x2="1026" y2="676.5" stroke="#fff" stroke-width="1"/>
<line x1="940" y1="707.5" x2="1026" y2="707.5" stroke="#fff" stroke-width="1"/>
<g filter="url(#th)"><text stroke="#fff" stroke-width="0.15" x="723" y="514.6" font-size="8.2" fill="#fff" text-anchor="start" font-weight="bold" font-family='"Liberation Sans","Noto Sans CJK SC",sans-serif' textLength="5.4" lengthAdjust="spacingAndGlyphs">10</text></g>
<g filter="url(#th)"><text stroke="#fff" stroke-width="0.15" x="736" y="514.6" font-size="8.2" fill="#fff" text-anchor="start" font-weight="bold" font-family='"Liberation Sans","Noto Sans CJK SC",sans-serif' textLength="41" lengthAdjust="spacingAndGlyphs">GB/T 70.1-2008</text></g>
<g filter="url(#th)"><text stroke="#fff" stroke-width="0.15" x="804" y="514.6" font-size="8.2" fill="#fff" text-anchor="start" font-weight="bold" font-family='"Liberation Sans","Noto Sans CJK SC",sans-serif' textLength="64.6" lengthAdjust="spacingAndGlyphs">内六角圆柱头螺钉 M4×16</text></g>
<g filter="url(#th)"><text stroke="#fff" stroke-width="0.15" x="879" y="514.6" font-size="8.2" fill="#fff" text-anchor="start" font-weight="bold" font-family='"Liberation Sans","Noto Sans CJK SC",sans-serif' textLength="2.6" lengthAdjust="spacingAndGlyphs">2</text></g>
<g filter="url(#th)"><text stroke="#fff" stroke-width="0.15" x="892.2" y="514.6" font-size="8.2" fill="#fff" text-anchor="start" font-weight="bold" font-family='"Liberation Sans","Noto Sans CJK SC",sans-serif' textLength="50" lengthAdjust="spacingAndGlyphs">钢/不锈钢/有色金属</text></g>
<g filter="url(#th)"><text stroke="#fff" stroke-width="0.15" x="723" y="526.6" font-size="8.2" fill="#fff" text-anchor="start" font-weight="bold" font-family='"Liberation Sans","Noto Sans CJK SC",sans-serif' textLength="2.7" lengthAdjust="spacingAndGlyphs">9</text></g>
<g filter="url(#th)"><text stroke="#fff" stroke-width="0.15" x="804" y="526.6" font-size="8.2" fill="#fff" text-anchor="start" font-weight="bold" font-family='"Liberation Sans","Noto Sans CJK SC",sans-serif' textLength="11.2" lengthAdjust="spacingAndGlyphs">心轴</text></g>
<g filter="url(#th)"><text stroke="#fff" stroke-width="0.15" x="879" y="526.6" font-size="8.2" fill="#fff" text-anchor="start" font-weight="bold" font-family='"Liberation Sans","Noto Sans CJK SC",sans-serif' textLength="2.6" lengthAdjust="spacingAndGlyphs">1</text></g>
<g filter="url(#th)"><text stroke="#fff" stroke-width="0.15" x="892.2" y="526.6" font-size="8.2" fill="#fff" text-anchor="start" font-weight="bold" font-family='"Liberation Sans","Noto Sans CJK SC",sans-serif' textLength="5.6" lengthAdjust="spacingAndGlyphs">45</text></g>
<g filter="url(#th)"><text stroke="#fff" stroke-width="0.15" x="723" y="538.6" font-size="8.2" fill="#fff" text-anchor="start" font-weight="bold" font-family='"Liberation Sans","Noto Sans CJK SC",sans-serif' textLength="2.7" lengthAdjust="spacingAndGlyphs">8</text></g>
<g filter="url(#th)"><text stroke="#fff" stroke-width="0.15" x="736" y="538.6" font-size="8.2" fill="#fff" text-anchor="start" font-weight="bold" font-family='"Liberation Sans","Noto Sans CJK SC",sans-serif' textLength="35" lengthAdjust="spacingAndGlyphs">GB/T 41-2000</text></g>
<g filter="url(#th)"><text stroke="#fff" stroke-width="0.15" x="804" y="538.6" font-size="8.2" fill="#fff" text-anchor="start" font-weight="bold" font-family='"Liberation Sans","Noto Sans CJK SC",sans-serif' textLength="42" lengthAdjust="spacingAndGlyphs">六角螺母-C级 M6</text></g>
<g filter="url(#th)"><text stroke="#fff" stroke-width="0.15" x="879" y="538.6" font-size="8.2" fill="#fff" text-anchor="start" font-weight="bold" font-family='"Liberation Sans","Noto Sans CJK SC",sans-serif' textLength="2.6" lengthAdjust="spacingAndGlyphs">2</text></g>
<g filter="url(#th)"><text stroke="#fff" stroke-width="0.15" x="892.2" y="538.6" font-size="8.2" fill="#fff" text-anchor="start" font-weight="bold" font-family='"Liberation Sans","Noto Sans CJK SC",sans-serif' textLength="5.6" lengthAdjust="spacingAndGlyphs">钢</text></g>
<g filter="url(#th)"><text stroke="#fff" stroke-width="0.15" x="723" y="550.6" font-size="8.2" fill="#fff" text-anchor="start" font-weight="bold" font-family='"Liberation Sans","Noto Sans CJK SC",sans-serif' textLength="2.7" lengthAdjust="spacingAndGlyphs">7</text></g>
<g filter="url(#th)"><text stroke="#fff" stroke-width="0.15" x="804" y="550.6" font-size="8.2" fill="#fff" text-anchor="start" font-weight="bold" font-family='"Liberation Sans","Noto Sans CJK SC",sans-serif' textLength="17" lengthAdjust="spacingAndGlyphs">对刀块</text></g>
<g filter="url(#th)"><text stroke="#fff" stroke-width="0.15" x="879" y="550.6" font-size="8.2" fill="#fff" text-anchor="start" font-weight="bold" font-family='"Liberation Sans","Noto Sans CJK SC",sans-serif' textLength="2.6" lengthAdjust="spacingAndGlyphs">1</text></g>
<g filter="url(#th)"><text stroke="#fff" stroke-width="0.15" x="892.2" y="550.6" font-size="8.2" fill="#fff" text-anchor="start" font-weight="bold" font-family='"Liberation Sans","Noto Sans CJK SC",sans-serif' textLength="5.6" lengthAdjust="spacingAndGlyphs">45</text></g>
<g filter="url(#th)"><text stroke="#fff" stroke-width="0.15" x="723" y="562.6" font-size="8.2" fill="#fff" text-anchor="start" font-weight="bold" font-family='"Liberation Sans","Noto Sans CJK SC",sans-serif' textLength="2.7" lengthAdjust="spacingAndGlyphs">6</text></g>
<g filter="url(#th)"><text stroke="#fff" stroke-width="0.15" x="736" y="562.6" font-size="8.2" fill="#fff" text-anchor="start" font-weight="bold" font-family='"Liberation Sans","Noto Sans CJK SC",sans-serif' textLength="41" lengthAdjust="spacingAndGlyphs">GB/T 70.1-2008</text></g>
<g filter="url(#th)"><text stroke="#fff" stroke-width="0.15" x="804" y="562.6" font-size="8.2" fill="#fff" text-anchor="start" font-weight="bold" font-family='"Liberation Sans","Noto Sans CJK SC",sans-serif' textLength="64.6" lengthAdjust="spacingAndGlyphs">内六角圆柱头螺钉 M4×16</text></g>
<g filter="url(#th)"><text stroke="#fff" stroke-width="0.15" x="879" y="562.6" font-size="8.2" fill="#fff" text-anchor="start" font-weight="bold" font-family='"Liberation Sans","Noto Sans CJK SC",sans-serif' textLength="2.6" lengthAdjust="spacingAndGlyphs">2</text></g>
<g filter="url(#th)"><text stroke="#fff" stroke-width="0.15" x="892.2" y="562.6" font-size="8.2" fill="#fff" text-anchor="start" font-weight="bold" font-family='"Liberation Sans","Noto Sans CJK SC",sans-serif' textLength="50" lengthAdjust="spacingAndGlyphs">钢/不锈钢/有色金属</text></g>
<g filter="url(#th)"><text stroke="#fff" stroke-width="0.15" x="723" y="574.6" font-size="8.2" fill="#fff" text-anchor="start" font-weight="bold" font-family='"Liberation Sans","Noto Sans CJK SC",sans-serif' textLength="2.7" lengthAdjust="spacingAndGlyphs">5</text></g>
<g filter="url(#th)"><text stroke="#fff" stroke-width="0.15" x="736" y="574.6" font-size="8.2" fill="#fff" text-anchor="start" font-weight="bold" font-family='"Liberation Sans","Noto Sans CJK SC",sans-serif' textLength="44" lengthAdjust="spacingAndGlyphs">GB/T 119.1-2000</text></g>
<g filter="url(#th)"><text stroke="#fff" stroke-width="0.15" x="804" y="574.6" font-size="8.2" fill="#fff" text-anchor="start" font-weight="bold" font-family='"Liberation Sans","Noto Sans CJK SC",sans-serif' textLength="72" lengthAdjust="spacingAndGlyphs">圆柱销-不淬硬钢和奥氏体不锈钢 6×16</text></g>
<g filter="url(#th)"><text stroke="#fff" stroke-width="0.15" x="879" y="574.6" font-size="8.2" fill="#fff" text-anchor="start" font-weight="bold" font-family='"Liberation Sans","Noto Sans CJK SC",sans-serif' textLength="2.6" lengthAdjust="spacingAndGlyphs">2</text></g>
<g filter="url(#th)"><text stroke="#fff" stroke-width="0.15" x="723" y="585.6" font-size="8.2" fill="#fff" text-anchor="start" font-weight="bold" font-family='"Liberation Sans","Noto Sans CJK SC",sans-serif' textLength="2.7" lengthAdjust="spacingAndGlyphs">4</text></g>
<g filter="url(#th)"><text stroke="#fff" stroke-width="0.15" x="804" y="585.6" font-size="8.2" fill="#fff" text-anchor="start" font-weight="bold" font-family='"Liberation Sans","Noto Sans CJK SC",sans-serif' textLength="16.5" lengthAdjust="spacingAndGlyphs">支撑板</text></g>
<g filter="url(#th)"><text stroke="#fff" stroke-width="0.15" x="879" y="585.6" font-size="8.2" fill="#fff" text-anchor="start" font-weight="bold" font-family='"Liberation Sans","Noto Sans CJK SC",sans-serif' textLength="2.6" lengthAdjust="spacingAndGlyphs">1</text></g>
<g filter="url(#th)"><text stroke="#fff" stroke-width="0.15" x="892.2" y="585.6" font-size="8.2" fill="#fff" text-anchor="start" font-weight="bold" font-family='"Liberation Sans","Noto Sans CJK SC",sans-serif' textLength="15" lengthAdjust="spacingAndGlyphs">HT200</text></g>
<g filter="url(#th)"><text stroke="#fff" stroke-width="0.15" x="723" y="597.6" font-size="8.2" fill="#fff" text-anchor="start" font-weight="bold" font-family='"Liberation Sans","Noto Sans CJK SC",sans-serif' textLength="2.7" lengthAdjust="spacingAndGlyphs">3</text></g>
<g filter="url(#th)"><text stroke="#fff" stroke-width="0.15" x="736" y="597.6" font-size="8.2" fill="#fff" text-anchor="start" font-weight="bold" font-family='"Liberation Sans","Noto Sans CJK SC",sans-serif' textLength="47" lengthAdjust="spacingAndGlyphs">JB/T 8006.2-1999</text></g>
<g filter="url(#th)"><text stroke="#fff" stroke-width="0.15" x="804" y="597.6" font-size="8.2" fill="#fff" text-anchor="start" font-weight="bold" font-family='"Liberation Sans","Noto Sans CJK SC",sans-serif' textLength="70" lengthAdjust="spacingAndGlyphs">A型六角头压紧螺钉 AM6×30</text></g>
<g filter="url(#th)"><text stroke="#fff" stroke-width="0.15" x="879" y="597.6" font-size="8.2" fill="#fff" text-anchor="start" font-weight="bold" font-family='"Liberation Sans","Noto Sans CJK SC",sans-serif' textLength="2.6" lengthAdjust="spacingAndGlyphs">1</text></g>
<g filter="url(#th)"><text stroke="#fff" stroke-width="0.15" x="892.2" y="597.6" font-size="8.2" fill="#fff" text-anchor="start" font-weight="bold" font-family='"Liberation Sans","Noto Sans CJK SC",sans-serif' textLength="11" lengthAdjust="spacingAndGlyphs">35钢</text></g>
<g filter="url(#th)"><text stroke="#fff" stroke-width="0.15" x="723" y="609.6" font-size="8.2" fill="#fff" text-anchor="start" font-weight="bold" font-family='"Liberation Sans","Noto Sans CJK SC",sans-serif' textLength="2.7" lengthAdjust="spacingAndGlyphs">2</text></g>
<g filter="url(#th)"><text stroke="#fff" stroke-width="0.15" x="804" y="609.6" font-size="8.2" fill="#fff" text-anchor="start" font-weight="bold" font-family='"Liberation Sans","Noto Sans CJK SC",sans-serif' textLength="22" lengthAdjust="spacingAndGlyphs">压紧支撑</text></g>
<g filter="url(#th)"><text stroke="#fff" stroke-width="0.15" x="879" y="609.6" font-size="8.2" fill="#fff" text-anchor="start" font-weight="bold" font-family='"Liberation Sans","Noto Sans CJK SC",sans-serif' textLength="2.6" lengthAdjust="spacingAndGlyphs">1</text></g>
<g filter="url(#th)"><text stroke="#fff" stroke-width="0.15" x="892.2" y="609.6" font-size="8.2" fill="#fff" text-anchor="start" font-weight="bold" font-family='"Liberation Sans","Noto Sans CJK SC",sans-serif' textLength="15" lengthAdjust="spacingAndGlyphs">HT200</text></g>
<g filter="url(#th)"><text stroke="#fff" stroke-width="0.15" x="723" y="621.6" font-size="8.2" fill="#fff" text-anchor="start" font-weight="bold" font-family='"Liberation Sans","Noto Sans CJK SC",sans-serif' textLength="2.7" lengthAdjust="spacingAndGlyphs">1</text></g>
<g filter="url(#th)"><text stroke="#fff" stroke-width="0.15" x="804" y="621.6" font-size="8.2" fill="#fff" text-anchor="start" font-weight="bold" font-family='"Liberation Sans","Noto Sans CJK SC",sans-serif' textLength="16.5" lengthAdjust="spacingAndGlyphs">夹具体</text></g>
<g filter="url(#th)"><text stroke="#fff" stroke-width="0.15" x="879" y="621.6" font-size="8.2" fill="#fff" text-anchor="start" font-weight="bold" font-family='"Liberation Sans","Noto Sans CJK SC",sans-serif' textLength="2.6" lengthAdjust="spacingAndGlyphs">1</text></g>
<g filter="url(#th)"><text stroke="#fff" stroke-width="0.15" x="892.2" y="621.6" font-size="8.2" fill="#fff" text-anchor="start" font-weight="bold" font-family='"Liberation Sans","Noto Sans CJK SC",sans-serif' textLength="15" lengthAdjust="spacingAndGlyphs">HT200</text></g>
<g filter="url(#th)"><text stroke="#fff" stroke-width="0.15" x="721.7" y="640.74" font-size="11.5" fill="#fff" text-anchor="start" font-weight="bold" font-family='"Liberation Sans","Noto Sans CJK SC",sans-serif' textLength="11" lengthAdjust="spacingAndGlyphs">序号</text></g>
<g filter="url(#th)"><text stroke="#fff" stroke-width="0.15" x="760.2" y="640.74" font-size="11.5" fill="#fff" text-anchor="start" font-weight="bold" font-family='"Liberation Sans","Noto Sans CJK SC",sans-serif' textLength="15.6" lengthAdjust="spacingAndGlyphs">代号</text></g>
<g filter="url(#th)"><text stroke="#fff" stroke-width="0.15" x="831.0" y="640.74" font-size="11.5" fill="#fff" text-anchor="start" font-weight="bold" font-family='"Liberation Sans","Noto Sans CJK SC",sans-serif' textLength="16" lengthAdjust="spacingAndGlyphs">名称</text></g>
<g filter="url(#th)"><text stroke="#fff" stroke-width="0.15" x="877.3" y="640.74" font-size="11.5" fill="#fff" text-anchor="start" font-weight="bold" font-family='"Liberation Sans","Noto Sans CJK SC",sans-serif' textLength="11" lengthAdjust="spacingAndGlyphs">数量</text></g>
<g filter="url(#th)"><text stroke="#fff" stroke-width="0.15" x="914.2" y="640.74" font-size="11.5" fill="#fff" text-anchor="start" font-weight="bold" font-family='"Liberation Sans","Noto Sans CJK SC",sans-serif' textLength="15.6" lengthAdjust="spacingAndGlyphs">材料</text></g>
<g filter="url(#th)"><text stroke="#fff" stroke-width="0.15" x="999.85" y="640.74" font-size="11.5" fill="#fff" text-anchor="start" font-weight="bold" font-family='"Liberation Sans","Noto Sans CJK SC",sans-serif' textLength="16.5" lengthAdjust="spacingAndGlyphs">备注</text></g>
<g filter="url(#th)"><text stroke="#fff" stroke-width="0.15" x="956.95" y="633.88" font-size="8" fill="#fff" text-anchor="start" font-weight="bold" font-family='"Liberation Sans","Noto Sans CJK SC",sans-serif' textLength="11.5" lengthAdjust="spacingAndGlyphs">单件</text></g>
<g filter="url(#th)"><text stroke="#fff" stroke-width="0.15" x="975.55" y="633.88" font-size="8" fill="#fff" text-anchor="start" font-weight="bold" font-family='"Liberation Sans","Noto Sans CJK SC",sans-serif' textLength="11.5" lengthAdjust="spacingAndGlyphs">总计</text></g>
<g filter="url(#th)"><text stroke="#fff" stroke-width="0.15" x="967.1" y="645.78" font-size="8" fill="#fff" text-anchor="start" font-weight="bold" font-family='"Liberation Sans","Noto Sans CJK SC",sans-serif' textLength="12" lengthAdjust="spacingAndGlyphs">重量</text></g>
<g filter="url(#th)"><text stroke="#0f0" stroke-width="0.15" x="723" y="692.996" font-size="8.6" fill="#0f0" text-anchor="start" font-weight="bold" font-family='"Liberation Sans","Noto Sans CJK SC",sans-serif' textLength="12.1" lengthAdjust="spacingAndGlyphs">标记</text></g>
<g filter="url(#th)"><text stroke="#0f0" stroke-width="0.15" x="739.8" y="692.996" font-size="8.6" fill="#0f0" text-anchor="start" font-weight="bold" font-family='"Liberation Sans","Noto Sans CJK SC",sans-serif' textLength="11.4" lengthAdjust="spacingAndGlyphs">处数</text></g>
<g filter="url(#th)"><text stroke="#0f0" stroke-width="0.15" x="762" y="692.996" font-size="8.6" fill="#0f0" text-anchor="start" font-weight="bold" font-family='"Liberation Sans","Noto Sans CJK SC",sans-serif' textLength="11.8" lengthAdjust="spacingAndGlyphs">分区</text></g>
<g filter="url(#th)"><text stroke="#0f0" stroke-width="0.15" x="781.9" y="692.996" font-size="8.6" fill="#0f0" text-anchor="start" font-weight="bold" font-family='"Liberation Sans","Noto Sans CJK SC",sans-serif' textLength="26.0" lengthAdjust="spacingAndGlyphs">更改文件号</text></g>
<g filter="url(#th)"><text stroke="#0f0" stroke-width="0.15" x="812.6" y="692.996" font-size="8.6" fill="#0f0" text-anchor="start" font-weight="bold" font-family='"Liberation Sans","Noto Sans CJK SC",sans-serif' textLength="11.8" lengthAdjust="spacingAndGlyphs">签名</text></g>
<g filter="url(#th)"><text stroke="#0f0" stroke-width="0.15" x="829.2" y="692.996" font-size="8.6" fill="#0f0" text-anchor="start" font-weight="bold" font-family='"Liberation Sans","Noto Sans CJK SC",sans-serif' textLength="26.0" lengthAdjust="spacingAndGlyphs">年、月、日</text></g>
<g filter="url(#th)"><text stroke="#0f0" stroke-width="0.15" x="724.7" y="705.196" font-size="8.6" fill="#0f0" text-anchor="start" font-weight="bold" font-family='"Liberation Sans","Noto Sans CJK SC",sans-serif' textLength="11.3" lengthAdjust="spacingAndGlyphs">设计</text></g>
<g filter="url(#th)"><text stroke="#0f0" stroke-width="0.15" x="789.4" y="705.196" font-size="8.6" fill="#0f0" text-anchor="start" font-weight="bold" font-family='"Liberation Sans","Noto Sans CJK SC",sans-serif' textLength="17.6" lengthAdjust="spacingAndGlyphs">标准化</text></g>
<g filter="url(#th)"><text stroke="#0f0" stroke-width="0.15" x="724.7" y="728.096" font-size="8.6" fill="#0f0" text-anchor="start" font-weight="bold" font-family='"Liberation Sans","Noto Sans CJK SC",sans-serif' textLength="11.3" lengthAdjust="spacingAndGlyphs">审核</text></g>
<g filter="url(#th)"><text stroke="#0f0" stroke-width="0.15" x="724.7" y="740.296" font-size="8.6" fill="#0f0" text-anchor="start" font-weight="bold" font-family='"Liberation Sans","Noto Sans CJK SC",sans-serif' textLength="11.3" lengthAdjust="spacingAndGlyphs">工艺</text></g>
<g filter="url(#th)"><text stroke="#0f0" stroke-width="0.15" x="792.3" y="740.296" font-size="8.6" fill="#0f0" text-anchor="start" font-weight="bold" font-family='"Liberation Sans","Noto Sans CJK SC",sans-serif' textLength="12.2" lengthAdjust="spacingAndGlyphs">批准</text></g>
<g filter="url(#th)"><text stroke="#0f0" stroke-width="0.15" x="866" y="707.396" font-size="8.6" fill="#0f0" text-anchor="start" font-weight="bold" font-family='"Liberation Sans","Noto Sans CJK SC",sans-serif' textLength="23" lengthAdjust="spacingAndGlyphs">阶段标记</text></g>
<g filter="url(#th)"><text stroke="#0f0" stroke-width="0.15" x="904.1" y="707.396" font-size="8.6" fill="#0f0" text-anchor="start" font-weight="bold" font-family='"Liberation Sans","Noto Sans CJK SC",sans-serif' textLength="12.2" lengthAdjust="spacingAndGlyphs">重量</text></g>
<g filter="url(#th)"><text stroke="#0f0" stroke-width="0.15" x="924.6" y="707.396" font-size="8.6" fill="#0f0" text-anchor="start" font-weight="bold" font-family='"Liberation Sans","Noto Sans CJK SC",sans-serif' textLength="11.8" lengthAdjust="spacingAndGlyphs">比例</text></g>
<g filter="url(#th)"><text stroke="#0f0" stroke-width="0.15" x="926.8" y="723.08" font-size="8" fill="#0f0" text-anchor="start" font-weight="bold" font-family='"Liberation Sans","Noto Sans CJK SC",sans-serif' textLength="7.7" lengthAdjust="spacingAndGlyphs">1:1</text></g>
<g filter="url(#th)"><text stroke="#0f0" stroke-width="0.15" x="862" y="738.196" font-size="8.6" fill="#0f0" text-anchor="start" font-weight="bold" font-family='"Liberation Sans","Noto Sans CJK SC",sans-serif' textLength="5.7" lengthAdjust="spacingAndGlyphs">共</text></g>
<g filter="url(#th)"><text stroke="#0f0" stroke-width="0.15" x="884.7" y="738.196" font-size="8.6" fill="#0f0" text-anchor="start" font-weight="bold" font-family='"Liberation Sans","Noto Sans CJK SC",sans-serif' textLength="6.4" lengthAdjust="spacingAndGlyphs">张</text></g>
<g filter="url(#th)"><text stroke="#0f0" stroke-width="0.15" x="905.9" y="738.196" font-size="8.6" fill="#0f0" text-anchor="start" font-weight="bold" font-family='"Liberation Sans","Noto Sans CJK SC",sans-serif' textLength="5.7" lengthAdjust="spacingAndGlyphs">第</text></g>
<g filter="url(#th)"><text stroke="#0f0" stroke-width="0.15" x="928.9" y="738.196" font-size="8.6" fill="#0f0" text-anchor="start" font-weight="bold" font-family='"Liberation Sans","Noto Sans CJK SC",sans-serif' textLength="6.4" lengthAdjust="spacingAndGlyphs">张</text></g>
<g filter="url(#th)"><text stroke="#0f0" stroke-width="0.3" x="827" y="434.2" font-size="12.5" fill="#0f0" text-anchor="start" font-weight="bold" font-family='"Liberation Serif","Noto Serif CJK SC",serif' textLength="48.5" lengthAdjust="spacingAndGlyphs">技术要求</text></g>
<g filter="url(#th)"><text stroke="#0f0" stroke-width="0.18" x="717.3" y="450.2" font-size="8.3" fill="#0f0" text-anchor="start" font-weight="bold" font-family='"Liberation Sans","Noto Sans CJK SC",sans-serif' textLength="249.5" lengthAdjust="spacingAndGlyphs">进入装配的零件及部件（包括外购件、外协件），均必须具有检验部门的合格证方能进行装配。</text></g>
<g filter="url(#th)"><text stroke="#0f0" stroke-width="0.18" x="717.3" y="462.5" font-size="8.3" fill="#0f0" text-anchor="start" font-weight="bold" font-family='"Liberation Sans","Noto Sans CJK SC",sans-serif' textLength="273.5" lengthAdjust="spacingAndGlyphs">零件在装配前必须清理和清洗干净，不得有毛刺、飞边、氧化皮、锈蚀、切屑、油污、着色剂和灰尘等。</text></g>
<g filter="url(#th)"><text stroke="#0f0" stroke-width="0.18" x="717.3" y="475.1" font-size="8.3" fill="#0f0" text-anchor="start" font-weight="bold" font-family='"Liberation Sans","Noto Sans CJK SC",sans-serif' textLength="119.5" lengthAdjust="spacingAndGlyphs">装配过程中零件不允许磕、碰、划伤和锈蚀。</text></g>
</svg>
</body></html>
